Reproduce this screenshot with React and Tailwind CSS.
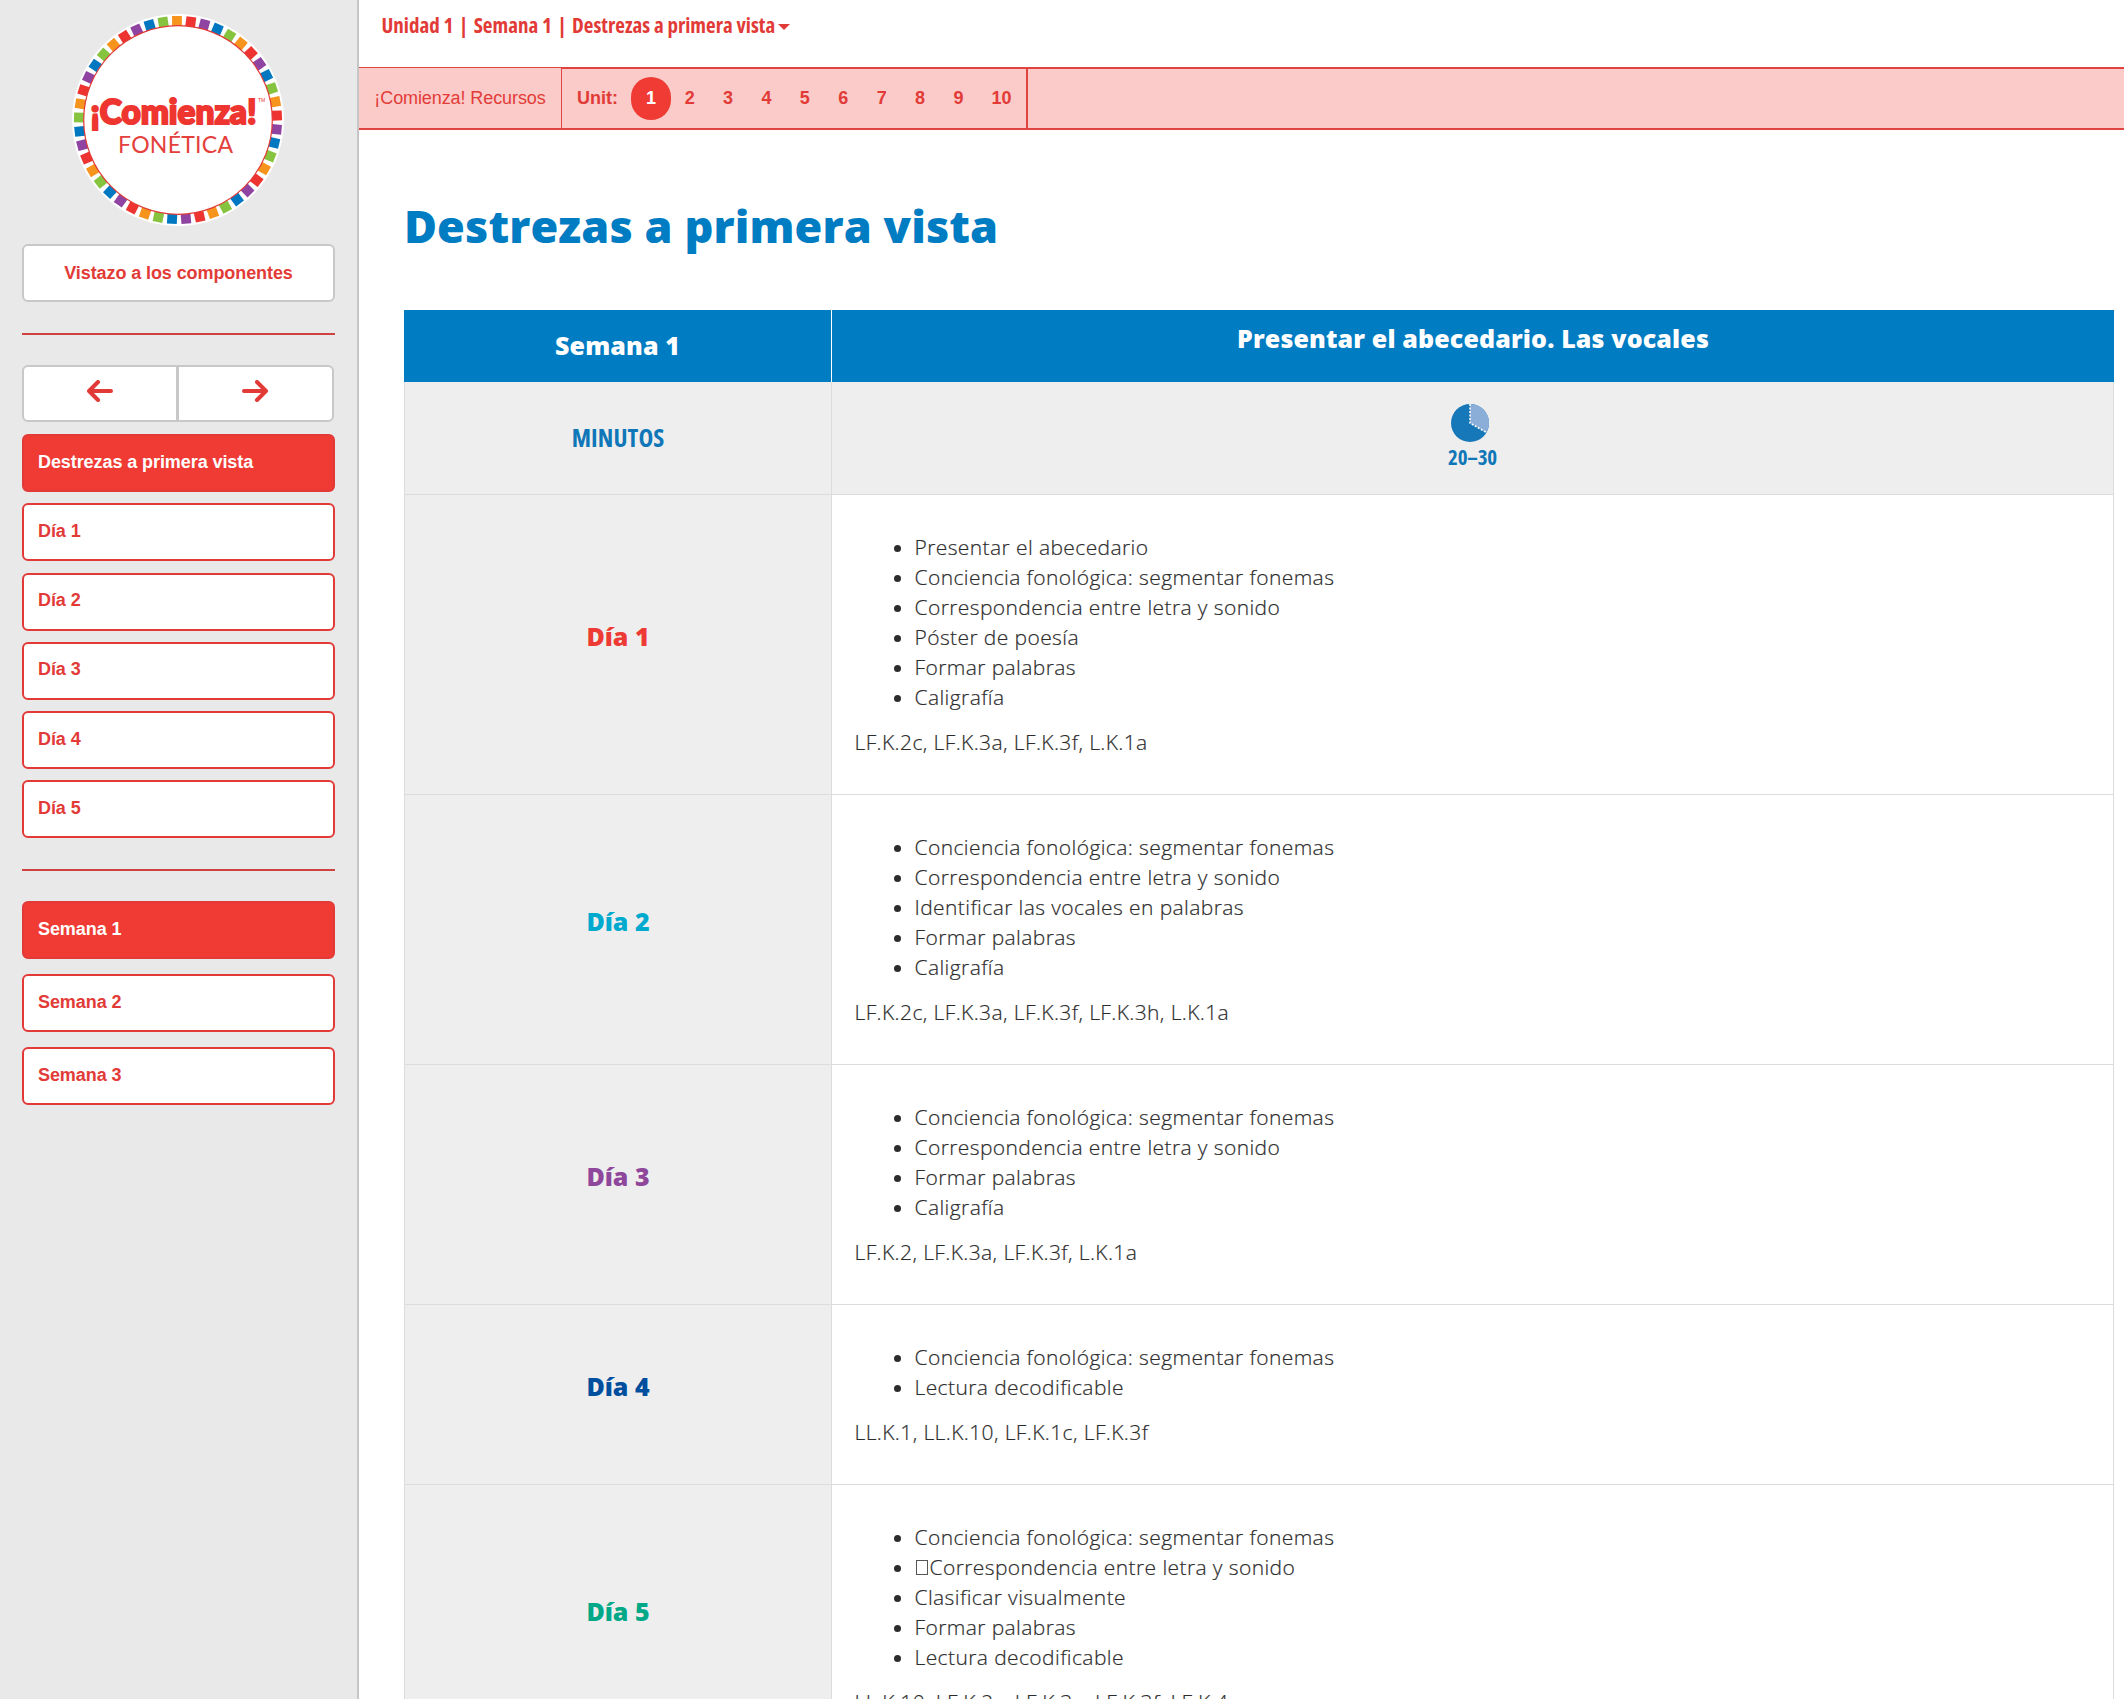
const COLORS = ['#f7941e', '#ee3430', '#8e44a0', '#0078c1', '#86c440'];

function Logo() {
  return (
    <svg viewBox="0 0 216 216" className="mr-[1px] block h-[216px] w-[216px]">
      <circle cx="108" cy="108" r="106" fill="#fff" />
      {Array.from({ length: 45 }, (_, i) => (
        <rect key={i} x="103.1" y="4" width="9.8" height="10" fill={COLORS[i % 5]} transform={`rotate(${i * 8 - 0.6} 108 108)`} />
      ))}
      <circle cx="108" cy="108" r="94.3" fill="#fff" stroke="#e03a36" strokeWidth="1.2" />
      <text x="20.5" y="111.5" textLength="166" lengthAdjust="spacingAndGlyphs" fill="#ee3530" stroke="#ee3530" strokeWidth="2.2" fontFamily="Lato" fontWeight="900" fontSize="35">¡Comienza!</text>
      <text x="188" y="90" fill="#ee3530" fontFamily="Liberation Sans" fontSize="5">TM</text>
      <text x="48" y="140.500" textLength="115" fill="#e4403c" fontFamily="Lato" fontWeight="400" fontSize="23">FONÉTICA</text>
    </svg>
  );
}

function NavButton({ children, active }) {
  return (
    <div className={`flex h-[58px] w-full items-center rounded-[6px] border-2 border-[#e23b37] px-[14px] pb-[2px] text-[18px] font-bold tracking-[-0.08px] ${active ? 'bg-[#ef3b34] text-white' : 'bg-white text-[#e23b37]'}`}>
      {children}
    </div>
  );
}

function Arrow({ flip }) {
  return (
    <svg viewBox="0 0 26 22" className={`h-[22px] w-[26px] ${flip ? '-scale-x-100' : ''}`} fill="none" stroke="#e23b37" strokeWidth="4" strokeLinecap="round" strokeLinejoin="round">
      <path d="M24 11H3M11 2L2 11L11 20" />
    </svg>
  );
}

const DAYS = [
  { name: 'Día 1', color: 'text-[#ee3a34]', items: ['Presentar el abecedario', 'Conciencia fonológica: segmentar fonemas', 'Correspondencia entre letra y sonido', 'Póster de poesía', 'Formar palabras', 'Caligrafía'], codes: 'LF.K.2c, LF.K.3a, LF.K.3f, L.K.1a' },
  { name: 'Día 2', color: 'text-[#00a9ce]', items: ['Conciencia fonológica: segmentar fonemas', 'Correspondencia entre letra y sonido', 'Identificar las vocales en palabras', 'Formar palabras', 'Caligrafía'], codes: 'LF.K.2c, LF.K.3a, LF.K.3f, LF.K.3h, L.K.1a' },
  { name: 'Día 3', color: 'text-[#8f479b]', items: ['Conciencia fonológica: segmentar fonemas', 'Correspondencia entre letra y sonido', 'Formar palabras', 'Caligrafía'], codes: 'LF.K.2, LF.K.3a, LF.K.3f, L.K.1a' },
  { name: 'Día 4', color: 'text-[#004f9e]', items: ['Conciencia fonológica: segmentar fonemas', 'Lectura decodificable'], codes: 'LL.K.1, LL.K.10, LF.K.1c, LF.K.3f' },
  { name: 'Día 5', color: 'text-[#00a887]', items: ['Conciencia fonológica: segmentar fonemas', '▯Correspondencia entre letra y sonido', 'Clasificar visualmente', 'Formar palabras', 'Lectura decodificable'], codes: 'LL.K.10, LF.K.2c, LF.K.3a, LF.K.3f, LF.K.4' },
];

function Item({ text }) {
  const boxed = text.startsWith('▯');
  return (
    <li>
      {boxed && <span className="mr-[2px] ml-[1px] inline-block h-[15px] w-[12px] border border-[#555]" />}
      {boxed ? text.slice(1) : text}
    </li>
  );
}

export default function App() {
  return (
    <div className="flex h-[1699px] w-full overflow-hidden bg-white font-['Liberation_Sans',sans-serif]">
      <aside className="flex w-[359px] shrink-0 flex-col border-r-2 border-[#c6c6c6] bg-[#e9e9e9] pr-[22px] pl-[22px]">
        <div className="flex h-[244px] justify-center pt-[12px]">
          <Logo />
        </div>
        <div className="flex h-[58px] shrink-0 items-center justify-center rounded-[6px] border-2 border-[#c8c8c8] bg-white text-[18px] font-bold tracking-[-0.09px] text-[#e23b37]">
          Vistazo a los componentes
        </div>
        <div className="mt-[31px] h-[2px] shrink-0 bg-[#d0423f]" />
        <div className="mt-[30px] flex h-[57px] w-[312px] shrink-0">
          <div className="flex w-[156px] items-center justify-center rounded-l-[6px] border-2 border-[#c8c8c8] bg-white pb-[5px]"><Arrow /></div>
          <div className="flex w-[156px] items-center justify-center rounded-r-[6px] border-2 border-l border-[#c8c8c8] bg-white pr-[2px] pb-[5px]"><Arrow flip /></div>
        </div>
        <div className="mt-[12px] flex shrink-0 flex-col gap-[11.3px]">
          <NavButton active>Destrezas a primera vista</NavButton>
          {['Día 1', 'Día 2', 'Día 3', 'Día 4', 'Día 5'].map((d) => <NavButton key={d}>{d}</NavButton>)}
        </div>
        <div className="mt-[31px] h-[2px] shrink-0 bg-[#d0423f]" />
        <div className="mt-[30px] flex shrink-0 flex-col gap-[15px]">
          <NavButton active>Semana 1</NavButton>
          <NavButton>Semana 2</NavButton>
          <NavButton>Semana 3</NavButton>
        </div>
      </aside>

      <main className="min-w-0 flex-1">
        <div className="flex h-[67px] items-start gap-[3px] pt-[11px] pl-[22.500px] font-['Open_Sans',sans-serif] text-[21px] leading-[28px] font-bold tracking-[0.01px] text-[#e23b37] [font-stretch:75%]">
          <span>
            Unidad 1 <span className="mx-[2px]">|</span> Semana 1 <span className="mx-[2px]">|</span> Destrezas a primera vista
          </span>
          <span className="mt-[13px] border-x-[6px] border-t-[6px] border-x-transparent border-t-[#e23b37]" />
        </div>
        <div className="flex h-[63px] border-b-2 border-[#e04440] bg-[#facbc9] text-[18px] text-[#e23b37]">
          <div className="flex w-[203px] items-center justify-center border-t border-r border-[#e04440] tracking-[-0.09px]">¡Comienza! Recursos</div>
          <div className="flex w-[466px] items-center border-t-2 border-r-2 border-[#e04440] pl-[15px] font-bold">
            <span className="mr-[13px]">Unit:</span>
            <span className="flex h-[43px] w-[40px] items-center justify-center rounded-full bg-[#ef3b34] text-white">1</span>
            {[2, 3, 4, 5, 6, 7, 8, 9].map((n) => <span key={n} className="w-[38.4px] pr-[1px] text-center">{n}</span>)}
            <span className="w-[47px] text-center">10</span>
          </div>
          <div className="flex-1 border-t-2 border-[#e04440]" />
        </div>

        <h1 className="mt-[66px] ml-[45px] font-['Open_Sans',sans-serif] text-[45px] leading-[60px] font-extrabold tracking-[0.1px] text-[#007cc3]">Destrezas a primera vista</h1>

        <div className="mt-[54px] ml-[45px] w-[1710px] font-['Open_Sans',sans-serif]">
          <div className="flex h-[72px] bg-[#007cc3] text-[25px] font-extrabold tracking-[0.14px] text-white">
            <div className="flex w-[428px] items-center justify-center border-r border-white">Semana 1</div>
            <div className="flex-1 pt-[11px] text-center leading-[34px]">Presentar el abecedario. Las vocales</div>
          </div>
          <div className="border-x border-[#dcdcdc]">
            <div className="flex h-[113px] border-b border-[#dcdcdc] bg-[#eee] text-[#0f77b8]">
              <div className="flex w-[427px] items-center justify-center border-r border-[#dcdcdc] text-[25px] font-bold tracking-[0.1px] [font-stretch:75%]">MINUTOS</div>
              <div className="flex flex-1 flex-col items-center pt-[22px]">
                <svg viewBox="0 0 38 38" className="mr-[5px] h-[38px] w-[38px]">
                  <circle cx="19" cy="19" r="19" fill="#1678b9" />
                  <path d="M19 19V0A19 19 0 0 1 35.500 28.500Z" fill="#8aaed8" />
                  <path d="M19 0V19L35.500 28.500" fill="none" stroke="#fff" strokeWidth="1.500" strokeDasharray="2 1.500" />
                </svg>
                <span className="text-[21px] leading-[30px] font-bold tracking-[-0.2px] [font-stretch:75%]">20–30</span>
              </div>
            </div>
            {DAYS.map((d) => (
              <div key={d.name} className="flex border-b border-[#dcdcdc]">
                <div className={`flex w-[427px] items-center justify-center border-r border-[#dcdcdc] bg-[#eee] pb-[15px] text-[25px] font-extrabold ${d.color}`}>{d.name}</div>
                <div className="flex-1 px-[22.500px] py-[37px] text-[21px] leading-[30px] font-light tracking-[0.4px] text-[#2c2c2c] [-webkit-text-stroke:0.2px_#2c2c2c]">
                  <ul className="mb-[15px] list-disc pl-[60px]">
                    {d.items.map((t) => <Item key={t} text={t} />)}
                  </ul>
                  <p>{d.codes}</p>
                </div>
              </div>
            ))}
          </div>
        </div>
      </main>
    </div>
  );
}
